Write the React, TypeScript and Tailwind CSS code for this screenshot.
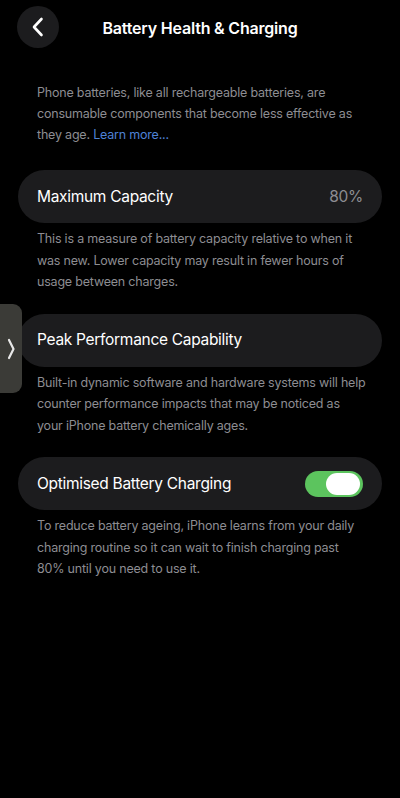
import React from 'react';

const Row = ({ label, children }: { label: string; children?: React.ReactNode }) => (
  <div className="flex items-center justify-between h-[53px] rounded-full bg-[#1c1c1e] pl-[19px] pr-[19px]">
    <span className="text-[15.5px] tracking-[-0.3px] text-white">{label}</span>
    {children}
  </div>
);

const Note = ({ children }: { children: React.ReactNode }) => (
  <p className="mt-[5px] px-[19px] whitespace-nowrap text-[12.5px] tracking-[-0.2px] leading-[21.5px] text-[#8d8d92]">{children}</p>
);

export default function App() {
  return (
    <div
      className="relative w-[400px] h-[798px] bg-black overflow-hidden"
      style={{ fontFamily: 'Inter, "Noto Sans", sans-serif' }}
    >
      {/* header */}
      <div className="relative flex items-center justify-center h-[56px]">
        <button className="absolute left-[17px] top-[6px] w-[42px] h-[42px] rounded-full bg-[#1c1c1e] flex items-center justify-center">
          <svg width="14" height="20" viewBox="0 0 14 20" fill="none">
            <path d="M10.5 2 L3 10 L10.5 18" stroke="white" strokeWidth="2.6" strokeLinecap="round" strokeLinejoin="round" />
          </svg>
        </button>
        <h1 className="text-[16px] font-semibold text-white tracking-[-0.2px]">Battery Health &amp; Charging</h1>
      </div>

      <div className="px-[18px]">
        <p className="mt-[26px] px-[19px] whitespace-nowrap text-[12.5px] tracking-[-0.2px] leading-[21px] text-[#8d8d92]">
          Phone batteries, like all rechargeable batteries, are
          <br />
          consumable components that become less effective as
          <br />
          they age. <span className="text-[#4e82d6]">Learn more...</span>
        </p>

        <div className="mt-[25px]">
          <Row label="Maximum Capacity">
            <span className="text-[15.5px] tracking-[-0.3px] text-[#8d8d92]">80%</span>
          </Row>
          <Note>
            This is a measure of battery capacity relative to when it
            <br />
            was new. Lower capacity may result in fewer hours of
            <br />
            usage between charges.
          </Note>
        </div>

        <div className="mt-[21px]">
          <Row label="Peak Performance Capability" />
          <Note>
            Built-in dynamic software and hardware systems will help
            <br />
            counter performance impacts that may be noticed as
            <br />
            your iPhone battery chemically ages.
          </Note>
        </div>

        <div className="mt-[21px]">
          <Row label="Optimised Battery Charging">
            <div className="w-[58px] h-[26px] rounded-full bg-[#5cc45e] flex items-center justify-end pr-[3px]">
              <div className="w-[34px] h-[22px] rounded-full bg-white" />
            </div>
          </Row>
          <Note>
            To reduce battery ageing, iPhone learns from your daily
            <br />
            charging routine so it can wait to finish charging past
            <br />
            80% until you need to use it.
          </Note>
        </div>
      </div>

      {/* side handle overlay */}
      <div className="absolute left-0 top-[304px] w-[22px] h-[89px] rounded-r-[9px] bg-[#3b3b37] flex items-center justify-center">
        <svg width="10" height="24" viewBox="0 0 10 24" fill="none">
          <path d="M3 3 L7.5 12 L3 21" stroke="#e8e8e8" strokeWidth="2.2" strokeLinecap="round" strokeLinejoin="round" />
        </svg>
      </div>
    </div>
  );
}
